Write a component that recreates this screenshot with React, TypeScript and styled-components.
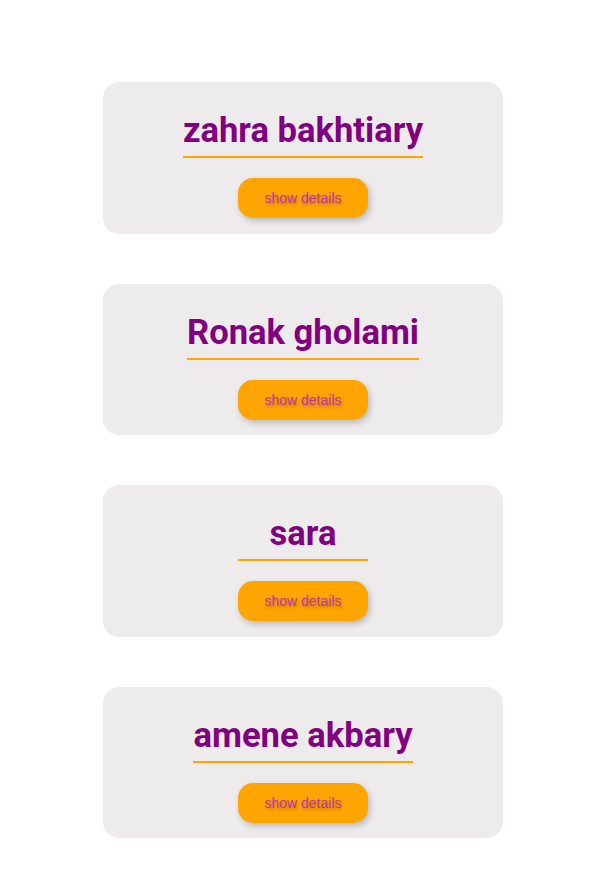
import React from "react";
import styled, { createGlobalStyle } from "styled-components";

const Global = createGlobalStyle`
  body {
    margin: 0;
    background: #ffffff;
    font-family: "Liberation Sans", Arial, sans-serif;
  }
`;

const List = styled.div`
  display: flex;
  flex-direction: column;
  align-items: center;
  gap: 50px;
  padding: 82px 1px 0 0;
`;

const Card = styled.div`
  width: 400px;
  height: 151.5px;
  box-sizing: border-box;
  background: #eeebec;
  border-radius: 16px;
  padding-top: 28px;
  display: flex;
  flex-direction: column;
  align-items: center;
`;

const Name = styled.h1`
  margin: 0;
  min-width: 130px;
  text-align: center;
  font-family: Roboto, "Liberation Sans", sans-serif;
  font-weight: 700;
  font-size: 34.6px;
  line-height: 40px;
  color: #800080;
  padding-bottom: 6px;
  border-bottom: 2px solid #ffa500;
`;

const Button = styled.button`
  margin-top: 20px;
  width: 130px;
  height: 40px;
  border: none;
  border-radius: 15px;
  background: #ffa500;
  color: #bd34b0;
  font-family: "Liberation Sans", Arial, sans-serif;
  font-size: 14px;
  text-shadow: 1px 2px 3px rgba(120, 60, 0, 0.4);
  box-shadow: 2px 3px 6px rgba(0, 0, 0, 0.22);
  cursor: pointer;
`;

const people = ["zahra bakhtiary", "Ronak gholami", "sara", "amene akbary"];

export default function App() {
  return (
    <>
      <Global />
      <List>
        {people.map((p) => (
          <Card key={p}>
            <Name>{p}</Name>
            <Button>show details</Button>
          </Card>
        ))}
      </List>
    </>
  );
}
